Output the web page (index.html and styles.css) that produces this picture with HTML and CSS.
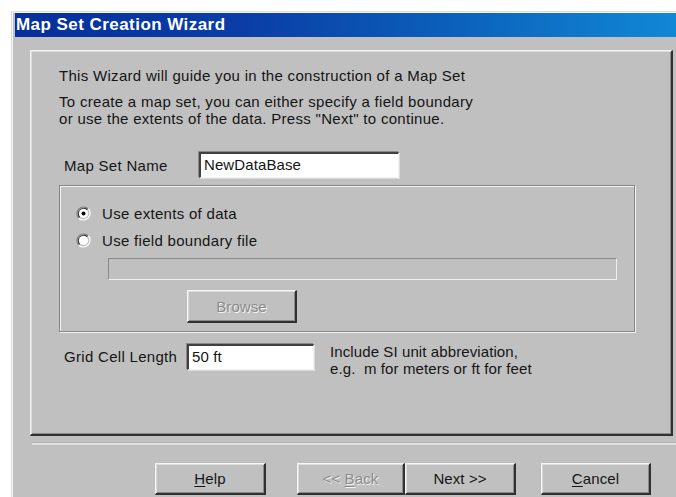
FILE: index.html
```html
<!DOCTYPE html>
<html>
<head>
<meta charset="utf-8">
<title>Map Set Creation Wizard</title>
<link rel="stylesheet" href="styles.css">
</head>
<body>
<div class="window">
  <div class="titlebar">Map Set Creation Wizard</div>
  <div class="panel">
    <p class="intro">This Wizard will guide you in the construction of a Map Set</p>
    <p class="intro second">To create a map set, you can either specify a field boundary<br>or use the extents of the data. Press "Next" to continue.</p>
    <div class="name-row">
      <label class="name-label">Map Set Name</label>
      <div class="edit name-edit">NewDataBase</div>
    </div>
    <div class="group">
      <div class="radio-row first">
        <svg class="radio" width="15" height="15" viewBox="0 0 15 15">
          <path d="M12.3 2.7 A6.8 6.8 0 0 0 2.7 12.3" fill="none" stroke="#808080" stroke-width="1.2"/>
          <path d="M11.3 3.7 A5.4 5.4 0 0 0 3.7 11.3" fill="none" stroke="#303030" stroke-width="1.2"/>
          <path d="M2.7 12.3 A6.8 6.8 0 0 0 12.3 2.7" fill="none" stroke="#ffffff" stroke-width="1.2"/>
          <circle cx="7.5" cy="7.5" r="4.6" fill="#ffffff"/>
          <circle cx="7.5" cy="7.5" r="2" fill="#000"/>
        </svg>
        <span>Use extents of data</span>
      </div>
      <div class="radio-row">
        <svg class="radio" width="15" height="15" viewBox="0 0 15 15">
          <path d="M12.3 2.7 A6.8 6.8 0 0 0 2.7 12.3" fill="none" stroke="#808080" stroke-width="1.2"/>
          <path d="M11.3 3.7 A5.4 5.4 0 0 0 3.7 11.3" fill="none" stroke="#303030" stroke-width="1.2"/>
          <path d="M2.7 12.3 A6.8 6.8 0 0 0 12.3 2.7" fill="none" stroke="#ffffff" stroke-width="1.2"/>
          <circle cx="7.5" cy="7.5" r="4.6" fill="#ffffff"/>
        </svg>
        <span>Use field boundary file</span>
      </div>
      <div class="edit file-edit"></div>
      <div class="button browse disabled"><span>Browse</span></div>
    </div>
    <div class="grid-row">
      <label class="grid-label">Grid Cell Length</label>
      <div class="edit grid-edit">50 ft</div>
      <div class="hint">Include SI unit abbreviation,<br>e.g.&nbsp; m for meters or ft for feet</div>
    </div>
  </div>
  <div class="separator"></div>
  <div class="buttons">
    <div class="button help"><span><u>H</u>elp</span></div>
    <div class="button back disabled"><span>&lt;&lt; <u>B</u>ack</span></div>
    <div class="button next"><span>Next &gt;&gt;</span></div>
    <div class="button cancel"><span><u>C</u>ancel</span></div>
  </div>
</div>
</body>
</html>
```

FILE: styles.css
```css
html, body {
  margin: 0;
  padding: 0;
  background: #ffffff;
  overflow: hidden;
  width: 676px;
  height: 497px;
}

body {
  font-family: "Liberation Sans", Arial, sans-serif;
  font-size: 15px;
  letter-spacing: 0.3px;
  color: #151515;
}

.window {
  margin: 11px 0 0 11px;
  width: 665px;
  height: 486px;
  background: #c0c0c0;
  border-top: 1px solid #dcdcdc;
  border-left: 1px solid #dcdcdc;
  box-shadow: inset 1px 1px 0 #f4f4f4;
  padding: 1px 0 0 3px;
  box-sizing: border-box;
  overflow: hidden;
}

.titlebar {
  height: 24px;
  line-height: 24px;
  padding-left: 1px;
  color: #ffffff;
  font-weight: bold;
  font-size: 17px;
  letter-spacing: 0.45px;
  background: linear-gradient(90deg, #062f9c 0%, #0a3ea6 35%, #0b5fba 65%, #1188d6 100%);
}

/* raised inner page of the wizard */
.panel {
  margin: 13px 0 0 15px;
  width: 643px;
  height: 386px;
  box-sizing: border-box;
  border-style: solid;
  border-width: 1px 2px 2px 1px;
  border-color: #f2f2f2 #303030 #303030 #f2f2f2;
  box-shadow: inset 1px 1px 0 #dcdcdc, inset -1px -1px 0 #8a8a8a;
  padding: 16px 0 0 28px;
  display: flex;
  flex-direction: column;
  align-items: flex-start;
}

.intro {
  margin: 0;
  line-height: 17px;
}

.intro.second {
  margin-top: 9px;
  line-height: 17px;
}

.name-row {
  display: flex;
  align-items: center;
  margin: 25px 0 0 5px;
}

.name-label {
  width: 135px;
}

/* sunken edit field */
.edit {
  box-sizing: border-box;
  background: #ffffff;
  border-style: solid;
  border-width: 2px 1px 1px 2px;
  border-color: #404040 #f0f0f0 #f0f0f0 #404040;
  box-shadow: 1px 1px 0 #dcdcdc, -1px -1px 0 #8a8a8a;
  padding-left: 3px;
  line-height: 22px;
  letter-spacing: 0.1px;
}

.name-edit {
  width: 200px;
  height: 26px;
}

.group {
  margin: 7px 0 0 0;
  width: 576px;
  height: 147px;
  box-sizing: border-box;
  border: 1px solid #868686;
  box-shadow: inset 1px 1px 0 #f2f2f2, 1px 1px 0 #f2f2f2;
  padding: 0 0 0 16px;
  display: flex;
  flex-direction: column;
  align-items: flex-start;
}

.radio-row {
  display: flex;
  align-items: center;
  height: 20px;
  margin-top: 7px;
}

.radio-row.first {
  margin-top: 17px;
}

.radio {
  margin-right: 11px;
  flex: none;
}

.file-edit {
  margin: 8px 0 0 32px;
  width: 509px;
  height: 22px;
  background: #c0c0c0;
  border-width: 1px;
  border-color: #8a8a8a #eeeeee #eeeeee #8a8a8a;
  box-shadow: none;
}

/* raised push button */
.button {
  box-sizing: border-box;
  display: flex;
  align-items: center;
  justify-content: center;
  border-style: solid;
  border-width: 1px 2px 2px 1px;
  border-color: #f4f4f4 #303030 #303030 #f4f4f4;
  box-shadow: inset 1px 1px 0 #dcdcdc, inset -1px -1px 0 #8a8a8a;
  letter-spacing: 0.1px;
  white-space: pre;
}

.button u {
  text-decoration-thickness: 1px;
  text-underline-offset: 2px;
}

.disabled {
  color: #8c8c8c;
  text-shadow: 1px 1px 0 #f2f2f2;
}

.browse {
  margin: 10px 0 0 111px;
  width: 110px;
  height: 33px;
}

.grid-row {
  display: flex;
  align-items: flex-start;
  margin: 12px 0 0 5px;
}

.grid-label {
  width: 123px;
  line-height: 26px;
}

.grid-edit {
  width: 127px;
  height: 26px;
}

.hint {
  margin: -1px 0 0 16px;
  line-height: 17px;
  letter-spacing: 0.1px;
}

.separator {
  margin: 6px 0 0 17px;
  height: 2px;
  background: #e2e2e2;
  border-top: 1px solid #b4b4b4;
}

.buttons {
  display: flex;
  margin: 18px 0 0 0;
  padding-left: 140px;
}

.buttons .button {
  height: 32px;
}

.help {
  width: 111px;
}

.back {
  margin-left: 31px;
  width: 108px;
}

.next {
  width: 111px;
}

.cancel {
  margin-left: 25px;
  width: 110px;
}
```
